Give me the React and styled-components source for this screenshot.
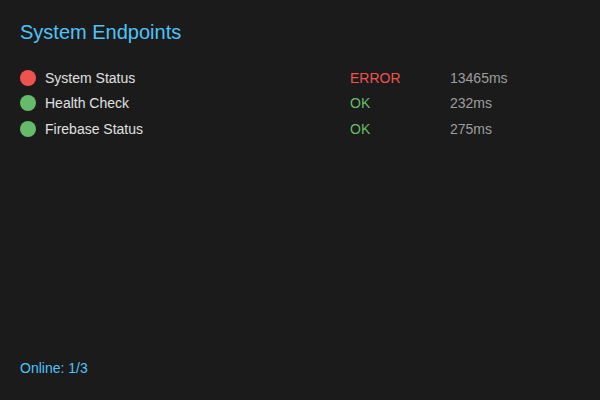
import React from 'react';
import styled, { createGlobalStyle } from 'styled-components';

const GlobalStyle = createGlobalStyle`
    html, body {
        margin: 0;
        padding: 0;
        background: #1b1b1b;
    }
`;

const Panel = styled.div`
    box-sizing: border-box;
    width: 600px;
    height: 400px;
    padding: 21px 20px 24px;
    background: #1b1b1b;
    font-family: 'Liberation Sans', Arial, sans-serif;
    display: flex;
    flex-direction: column;
`;

const Title = styled.h2`
    margin: 0 0 21px 0;
    font-size: 20px;
    font-weight: normal;
    line-height: 23px;
    color: #4fc3f7;
`;

const List = styled.div`
    display: flex;
    flex-direction: column;
    flex: 1;
`;

const Row = styled.div`
    display: flex;
    align-items: center;
    height: 25.5px;
    font-size: 14px;
`;

const Dot = styled.span`
    width: 16px;
    height: 16px;
    border-radius: 50%;
    margin-right: 9px;
    flex-shrink: 0;
    background: ${(p) => (p.$ok ? '#66bb6a' : '#ef5350')};
`;

const Name = styled.span`
    width: 305px;
    color: #e0e0e0;
`;

const State = styled.span`
    width: 100px;
    color: ${(p) => (p.$ok ? '#66bb6a' : '#ef5350')};
`;

const Time = styled.span`
    color: #9e9e9e;
`;

const Footer = styled.div`
    font-size: 14px;
    line-height: 16px;
    color: #4fc3f7;
`;

const endpoints = [
    { name: 'System Status', status: 'ERROR', time: 13465 },
    { name: 'Health Check', status: 'OK', time: 232 },
    { name: 'Firebase Status', status: 'OK', time: 275 },
];

const onlineCount = 1;

export default function App() {
    return (
        <>
            <GlobalStyle />
            <Panel>
                <Title>System Endpoints</Title>
                <List>
                    {endpoints.map((e) => (
                        <Row key={e.name}>
                            <Dot $ok={e.status === 'OK'} />
                            <Name>{e.name}</Name>
                            <State $ok={e.status === 'OK'}>{e.status}</State>
                            <Time>{e.time}ms</Time>
                        </Row>
                    ))}
                </List>
                <Footer>Online: {onlineCount}/{endpoints.length}</Footer>
            </Panel>
        </>
    );
}
